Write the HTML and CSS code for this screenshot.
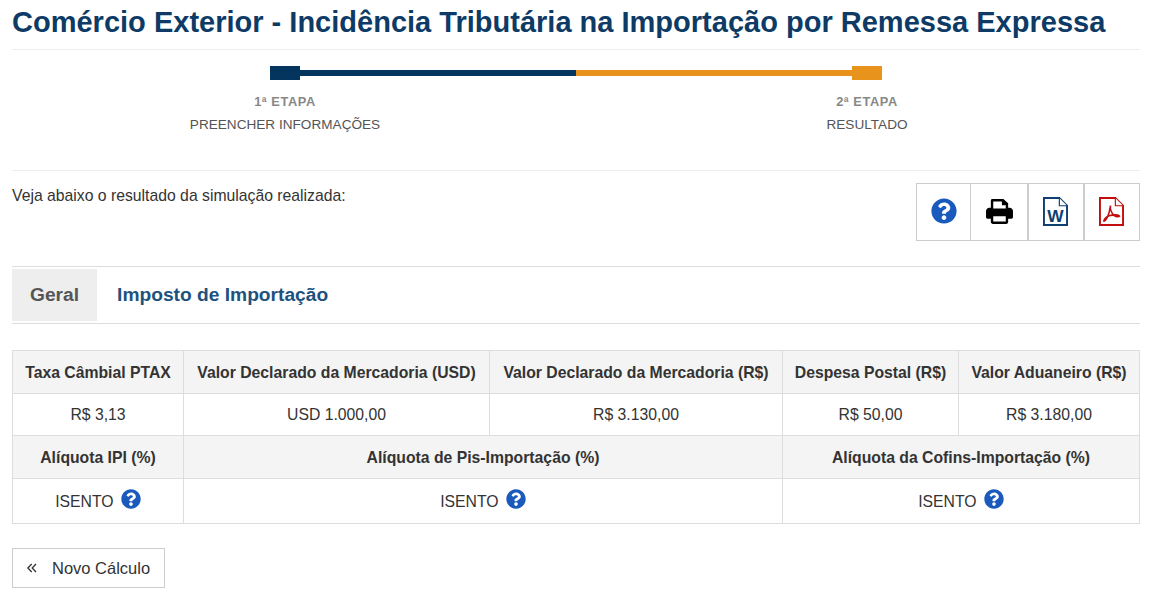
FILE: index.html
```html
<!DOCTYPE html>
<html lang="pt-BR">
<head>
<meta charset="utf-8">
<title>Comércio Exterior</title>
<link rel="stylesheet" href="styles.css">
</head>
<body>
<svg class="defs" width="0" height="0" aria-hidden="true">
  <symbol id="help" viewBox="0 0 512 512">
    <path d="M504 256c0 137-111 248-248 248S8 393 8 256 119 8 256 8s248 111 248 248zM262.700 90c-54.500 0-89.300 23-116.600 63.800-3.500 5.300-2.400 12.400 2.700 16.300l34.700 26.300c5.200 3.900 12.600 3 16.700-2.100 17.900-22.700 30.100-35.800 57.300-35.800 20.400 0 45.700 13.100 45.700 32.900 0 15-12.400 22.700-32.600 34-23.600 13.200-54.800 29.700-54.800 70.900V300c0 6.600 5.400 12 12 12h56c6.600 0 12-5.400 12-12v-1.300c0-28.600 83.500-29.800 83.500-107.100 0-58.200-60.400-102.400-117-102.400zM256 339.600c-25.400 0-46.200 20.700-46.200 46.200S230.600 432 256 432s46.200-20.700 46.200-46.200-20.800-46.200-46.200-46.200z"/>
  </symbol>
</svg>
<h1 class="title">Comércio Exterior - Incidência Tributária na Importação por Remessa Expressa</h1>
<section class="steps">
  <div class="track">
    <span class="cap cap-dark"></span>
    <span class="line line-dark"></span>
    <span class="line line-orange"></span>
    <span class="cap cap-orange"></span>
  </div>
  <div class="labels">
    <div class="step step-one"><strong>1ª ETAPA</strong><span>PREENCHER INFORMAÇÕES</span></div>
    <div class="step step-two"><strong>2ª ETAPA</strong><span>RESULTADO</span></div>
  </div>
</section>
<section class="result-bar">
  <p class="intro">Veja abaixo o resultado da simulação realizada:</p>
  <div class="tools">
    <a class="tool tool-help"><svg class="i-help-lg"><use href="#help"/></svg></a>
    <a class="tool tool-print">
      <svg width="27" height="25" viewBox="0 0 28 26"><path fill="#000" d="M6.500 0H18l5 4.500V9h1.500C26.400 9 28 10.600 28 12.500V19c0 .8-.7 1.500-1.500 1.500H23v3.500c0 1-.8 2-2 2H7c-1.100 0-2-.9-2-2v-3.500H1.500C.7 20.500 0 19.800 0 19v-6.500C0 10.600 1.600 9 3.500 9H5V1.500C5 .7 5.700 0 6.500 0z"/><path fill="#fff" d="M7.500 2.500h9v4h4V10h-13zM7.500 18h13v5.500h-13z"/></svg>
    </a>
    <a class="tool tool-word">
      <svg width="25" height="29" viewBox="0 0 26 30"><path fill="#fff" stroke="#0f3f70" stroke-width="2" d="M1 1h16l8 8v20H1z"/><path fill="#fff" stroke="#0f3f70" stroke-width="1.200" d="M17 1v8h8"/><text class="w" x="13" y="25.500" text-anchor="middle">W</text></svg>
    </a>
    <a class="tool tool-pdf">
      <svg width="25" height="29" viewBox="0 0 26 30"><path fill="#fff" stroke="#c40d0d" stroke-width="2" d="M1 1h16l8 8v20H1z"/><path fill="#fff" stroke="#c40d0d" stroke-width="1.200" d="M17 1v8h8"/><path fill="none" stroke="#c40d0d" stroke-width="1.600" d="M12 9c-.8 3.500 1 7 3 9.500 1.800 2 5.500 2.500 6.500 1.300-1-1.500-6.500-1.800-11-.3-2.500 1-5 3.200-5.500 5.500 2 .4 5.300-5 7-16z"/></svg>
    </a>
  </div>
</section>
<nav class="tabs">
  <a class="tab tab-active">Geral</a>
  <a class="tab">Imposto de Importação</a>
</nav>
<table class="grid">
  <colgroup>
    <col class="c1"><col class="c2"><col class="c3"><col class="c4"><col class="c5">
  </colgroup>
  <tr class="r-head">
    <th>Taxa Câmbial PTAX</th>
    <th>Valor Declarado da Mercadoria (USD)</th>
    <th>Valor Declarado da Mercadoria (R$)</th>
    <th>Despesa Postal (R$)</th>
    <th>Valor Aduaneiro (R$)</th>
  </tr>
  <tr class="r-body">
    <td>R$ 3,13</td>
    <td>USD 1.000,00</td>
    <td>R$ 3.130,00</td>
    <td>R$ 50,00</td>
    <td>R$ 3.180,00</td>
  </tr>
  <tr class="r-head2">
    <th>Alíquota IPI (%)</th>
    <th colspan="2">Alíquota de Pis-Importação (%)</th>
    <th colspan="2">Alíquota da Cofins-Importação (%)</th>
  </tr>
  <tr class="r-last">
    <td>ISENTO <svg class="i-help"><use href="#help"/></svg></td>
    <td colspan="2">ISENTO <svg class="i-help"><use href="#help"/></svg></td>
    <td colspan="2">ISENTO <svg class="i-help"><use href="#help"/></svg></td>
  </tr>
</table>
<a class="back"><svg class="chev" width="10" height="10" viewBox="0 0 10 10"><path fill="none" stroke="#333" stroke-width="1.300" d="M4.700 1 .9 5l3.800 4M9 1 5.200 5 9 9"/></svg>Novo Cálculo</a>
</body>
</html>
```

FILE: styles.css
```css
* { box-sizing: border-box; }
html, body { margin: 0; padding: 0; }
body {
  padding: 0 16px 0 12px;
  background: #fff;
  color: #333;
  font-family: "Liberation Sans", Arial, sans-serif;
  font-size: 15.75px;
  line-height: 22px;
  overflow: hidden;
  height: 595px;
}
.defs { display: block; position: absolute; }
.title {
  margin: 0;
  height: 50px;
  padding-top: 6px;
  border-bottom: 1px solid #eee;
  color: #0d3b66;
  font-size: 29.03px;
  line-height: 32px;
  font-weight: 700;
}
.steps { height: 121px; border-bottom: 1px solid #eee; padding-top: 16px; }
.track { display: flex; align-items: center; margin-left: 258px; width: 612px; height: 14px; }
.cap { width: 30px; height: 14px; }
.cap-dark { background: #03355f; }
.cap-orange { background: #e8931c; }
.line { flex: 1; height: 6px; }
.line-dark { background: #03355f; }
.line-orange { background: #e8931c; }
.labels { display: flex; font-size: 13.6px; color: #555; }
.step { display: flex; flex: none; flex-direction: column; align-items: center; text-align: center; }
.step strong { color: #888; font-size: 12.8px; letter-spacing: .6px; line-height: 18px; margin-top: 13px; }
.step span { line-height: 18px; margin-top: 5px; }
.step-one { width: 546px; }
.step-two { width: 618px; }
.result-bar { display: flex; justify-content: space-between; height: 96px; border-bottom: 1px solid #ddd; padding-top: 12px; }
.intro { margin: 0; line-height: 25px; }
.tools { display: flex; height: 58px; }
.tool { display: flex; align-items: center; justify-content: center; height: 58px; padding-bottom: 2px; border: 1px solid #ccc; }
.tool-help { width: 55px; }
.tool-print { width: 58px; margin-left: -1px; padding-left: 1px; }
.tool-word { width: 56px; padding-right: 1px; }
.tool-pdf { width: 56px; padding-right: 1px; }
.i-help-lg { width: 26px; height: 26px; fill: #1a5abc; }
.w { font: 700 18px "Liberation Sans", sans-serif; fill: #0f3f70; }
.tabs { display: flex; height: 57px; padding-top: 2px; border-bottom: 1px solid #ddd; }
.tab { height: 52px; padding: 0 18px 0 20px; font-size: 19.2px; font-weight: 700; line-height: 51px; color: #1d527f; }
.tab-active { background: #eee; color: #555; padding: 0 18px; }
.grid { margin-top: 26px; border-collapse: collapse; table-layout: fixed; width: 1127px; }
.c1 { width: 171px; }
.c2 { width: 306px; }
.c3 { width: 293px; }
.c4 { width: 176px; }
.c5 { width: 181px; }
.grid th, .grid td { border: 1px solid #ddd; padding: 0; text-align: center; color: #333; }
.grid th { background: #f4f4f4; font-weight: 700; padding-top: 2px; }
.r-head { height: 43px; }
.r-body { height: 42px; }
.r-head2 { height: 43px; }
.r-last { height: 45px; }
.i-help { width: 20px; height: 20px; fill: #1a5abc; margin-left: 3px; vertical-align: -2px; }
.back {
  display: inline-flex; align-items: center;
  margin-top: 24px; width: 153px; height: 40px;
  border: 1px solid #ccc; padding-left: 14px; color: #333; font-size: 16.5px;
}
.chev { margin-right: 15px; }
```
